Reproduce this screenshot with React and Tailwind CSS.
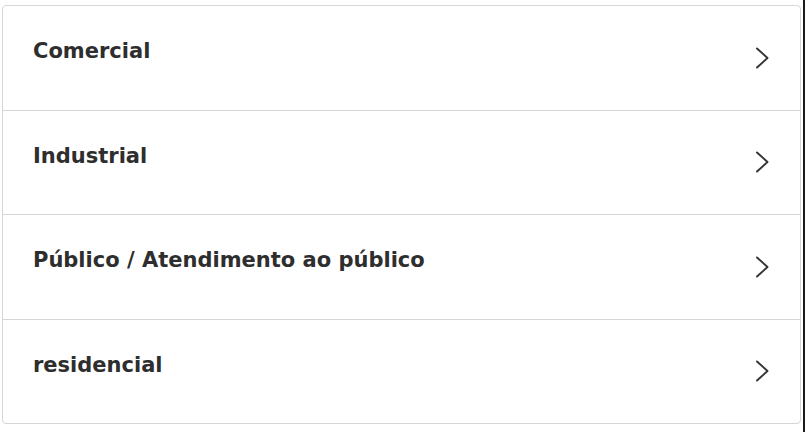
import React from 'react';

const categorias = ['Comercial', 'Industrial', 'Público / Atendimento ao público', 'residencial'];

const Chevron = () => (
  <svg width="14" height="22" viewBox="0 0 14 22" fill="none" stroke="#333333" strokeWidth="1.9" strokeLinecap="round" strokeLinejoin="round">
    <path d="M2 1.5 L12.5 11 L2 20.5" />
  </svg>
);

const App = () => {
  return (
    <div className="w-[805px] h-[432px] bg-white flex relative" style={{ fontFamily: '"DejaVu Sans", "Noto Sans", sans-serif' }}>
      <div className="ml-[2px] mt-[5px] w-[799px] h-[419px] border border-[#d6d6d6] rounded-[4px] flex flex-col">
        {categorias.map((nome, i) => (
          <div
            key={nome}
            className={`flex-1 flex justify-between pl-[30px] pr-[31px] ${i > 0 ? 'border-t border-[#d6d6d6]' : ''}`}
          >
            <span className="pt-[32px] text-[21px] leading-[26px] font-bold text-[#2e2e2e]">{nome}</span>
            <div className="self-center">
              <Chevron />
            </div>
          </div>
        ))}
      </div>
      <div className="absolute right-0 top-0 w-[2px] h-full bg-[#1a1a1a]" />
    </div>
  );
};

export default App;
